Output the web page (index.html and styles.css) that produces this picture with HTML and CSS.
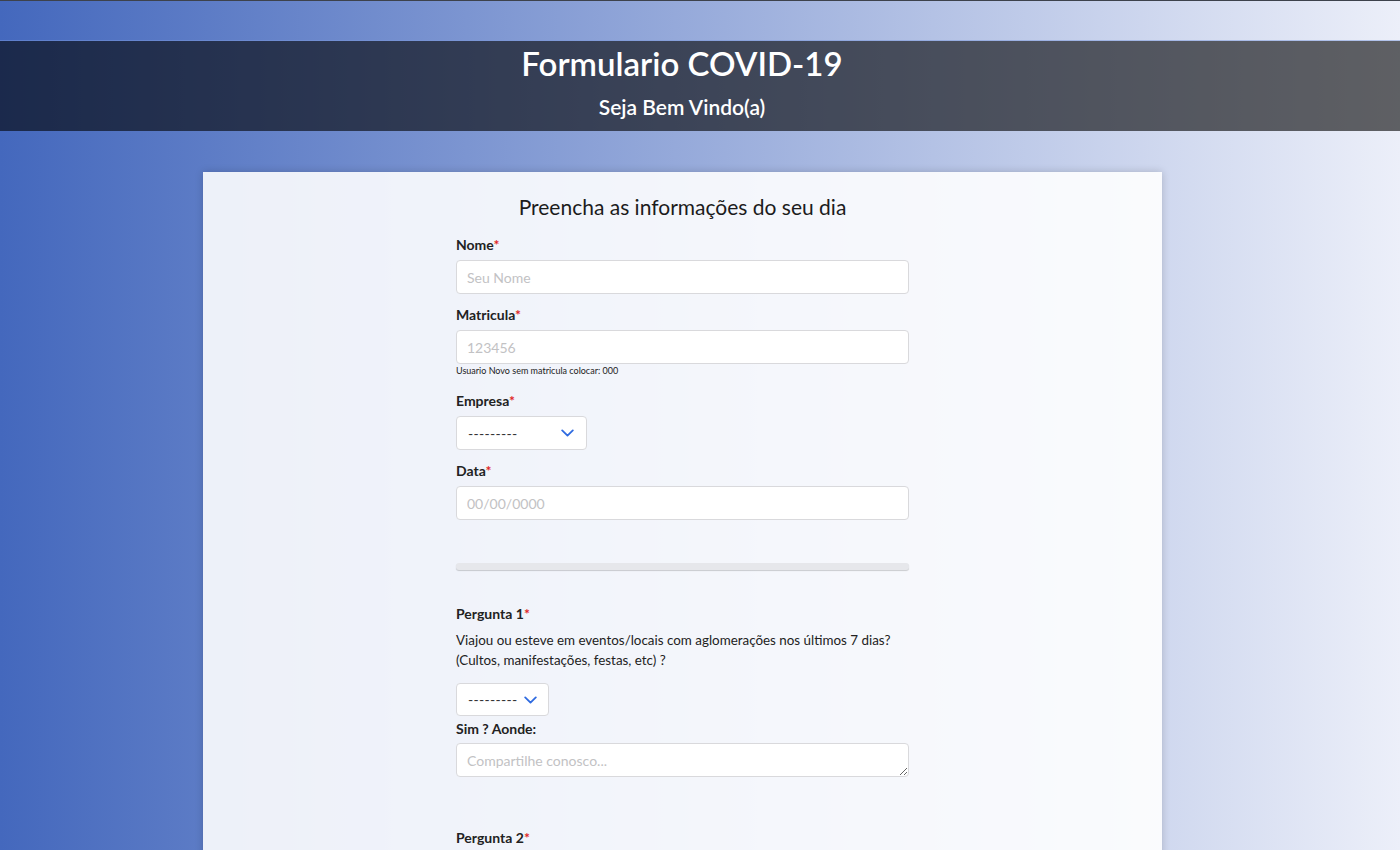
FILE: index.html
```html
<!DOCTYPE html>
<html lang="pt-BR">
<head>
<meta charset="utf-8">
<title>Formulario COVID-19</title>
<link rel="stylesheet" href="styles.css">
</head>
<body>
<header class="topbar">
  <h1 class="topbar-title">Formulario COVID-19</h1>
  <h2 class="topbar-sub">Seja Bem Vindo(a)</h2>
</header>
<main class="card">
  <form class="form-col">
    <h3 class="form-title">Preencha as informações do seu dia</h3>

    <div class="field">
      <label class="lbl">Nome<span class="req">*</span></label>
      <input class="inp" type="text" placeholder="Seu Nome">
    </div>

    <div class="field field-help">
      <label class="lbl">Matricula<span class="req">*</span></label>
      <input class="inp" type="text" placeholder="123456">
      <small class="help">Usuario Novo sem matricula colocar: 000</small>
    </div>

    <div class="field">
      <label class="lbl">Empresa<span class="req">*</span></label>
      <div class="sel sel-wide">
        <span class="sel-text">---------</span>
        <svg class="chev" width="13" height="8" viewBox="0 0 13 8"><path d="M1.2 1.4 L6.5 6.6 L11.8 1.4" fill="none" stroke="#2f6be0" stroke-width="1.8" stroke-linecap="round" stroke-linejoin="round"/></svg>
      </div>
    </div>

    <div class="field">
      <label class="lbl">Data<span class="req">*</span></label>
      <input class="inp" type="text" placeholder="00/00/0000">
    </div>

    <div class="sep"></div>

    <div class="question">
      <label class="lbl">Pergunta 1<span class="req">*</span></label>
      <p class="q-text">Viajou ou esteve em eventos/locais com aglomerações nos últimos 7 dias?<br>(Cultos, manifestações, festas, etc) ?</p>
      <div class="sel sel-narrow">
        <span class="sel-text">---------</span>
        <svg class="chev" width="13" height="8" viewBox="0 0 13 8"><path d="M1.2 1.4 L6.5 6.6 L11.8 1.4" fill="none" stroke="#2f6be0" stroke-width="1.8" stroke-linecap="round" stroke-linejoin="round"/></svg>
      </div>
      <label class="lbl lbl-tight">Sim ? Aonde:</label>
      <textarea class="inp txt" rows="1" placeholder="Compartilhe conosco..."></textarea>
    </div>

    <div class="question q2">
      <label class="lbl">Pergunta 2<span class="req">*</span></label>
    </div>
  </form>
</main>
</body>
</html>
```

FILE: styles.css
```css
* { box-sizing: border-box; }

html, body { height: 100%; }

body {
  margin: 0;
  border-top: 1px solid #3d424c;
  background: linear-gradient(to right, #4468bd 0%, #eceff9 100%);
  font-family: "Lato", "Liberation Sans", sans-serif;
  color: #222;
  overflow: hidden;
}

.topbar {
  margin-top: 40px;
  height: 90px;
  background: rgba(0, 0, 0, 0.6);
  box-shadow: 0 -1px 0 rgba(120, 150, 220, 0.5);
  text-align: center;
  color: #fff;
  padding: 3px 36px 0 0;
}

.topbar-title {
  margin: 0;
  font-size: 33px;
  line-height: 38px;
  font-weight: 600;
}

.topbar-sub {
  margin: 13px 0 0;
  font-size: 21px;
  line-height: 24px;
  font-weight: 600;
}

.card {
  width: 959px;
  margin: 41px 0 0 203px;
  min-height: 700px;
  background: rgba(255, 255, 255, 0.89);
  box-shadow: 0 0 8px rgba(0, 0, 0, 0.18);
  padding-top: 22px;
}

.form-col {
  width: 453px;
  margin: 0 auto;
  display: flex;
  flex-direction: column;
}

.form-title {
  margin: 0 0 16px;
  text-align: center;
  font-size: 21px;
  line-height: 26px;
  font-weight: 400;
  color: #1c1c1c;
}

.field {
  display: flex;
  flex-direction: column;
  align-items: flex-start;
  margin-bottom: 12px;
}

.field-help { margin-bottom: 15px; }

.lbl {
  display: block;
  font-size: 14px;
  line-height: 17px;
  font-weight: 700;
  color: #222;
  margin-bottom: 7px;
}

.req { color: #e02424; }

.inp {
  width: 100%;
  height: 34px;
  border: 1px solid #d9d9dc;
  border-radius: 4px;
  background: #fff;
  padding: 0 10px;
  font-family: "Lato", "Liberation Sans", sans-serif;
  font-size: 14px;
  color: #333;
  outline: none;
}

.inp::placeholder { color: #c2c2c4; }

.help {
  font-size: 9px;
  line-height: 12px;
  color: #222;
  margin-top: 1px;
}

.sel {
  height: 34px;
  border: 1px solid #d9d9dc;
  border-radius: 4px;
  background: #fff;
  display: flex;
  align-items: center;
  justify-content: space-between;
  padding: 0 12px 0 11px;
}

.sel-wide { width: 131px; }
.sel-narrow { width: 93px; height: 33px; padding-right: 11px; }

.sel-text {
  font-size: 14px;
  color: #333;
  letter-spacing: 0.3px;
}

.chev { display: block; }

.sep {
  margin-top: 31px;
  height: 7px;
  border-radius: 3px;
  background: #e6e7eb;
  box-shadow: 0 1px 1px rgba(0, 0, 0, 0.18);
  margin-bottom: 35px;
}

.question {
  display: flex;
  flex-direction: column;
  align-items: flex-start;
}

.q-text {
  margin: 1px 0 13px;
  font-size: 13.4px;
  line-height: 20px;
  color: #222;
  white-space: nowrap;
}

.lbl-tight { margin-top: 4px; margin-bottom: 6px; }

.txt {
  display: block;
  padding-top: 8px;
  resize: vertical;
  min-height: 34px;
  line-height: 17px;
}

.q2 { margin-top: 52px; }
```
